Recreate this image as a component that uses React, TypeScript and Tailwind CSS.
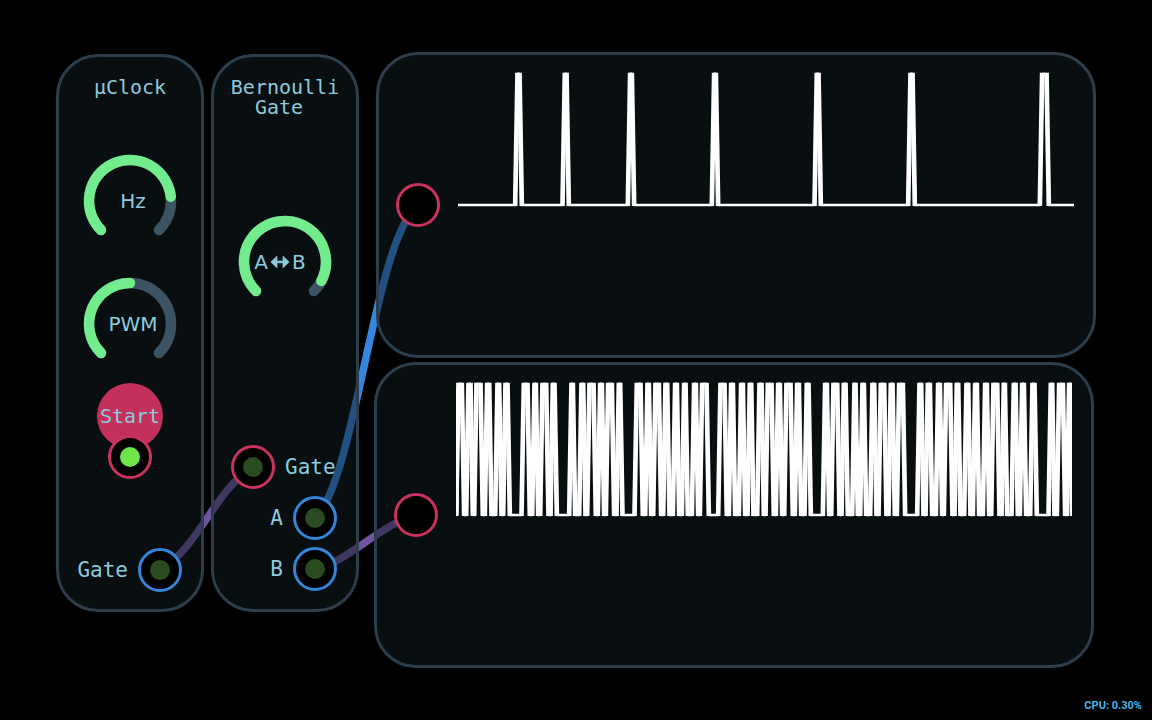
import { useState, type ReactNode } from "react";

type Polarity = "in" | "out";

const SCALE = 3;
const TOP = 6;
const BASE = 399;
const HALF = 7.5;
const SLOPE = 7;

// Pulse extents, in thirds of a pixel along the trace.
const SPARSE: [number, number][] = [
  [171, 192],
  [313, 333],
  [509, 529],
  [761, 781],
  [1069, 1089],
  [1350, 1371],
  [1745, 1773],
];

const DENSE: [number, number][] = [
  [0, 25], [30, 51], [54, 81], [86, 107], [117, 137], [141, 162],
  [196, 222], [228, 247], [252, 278], [283, 303],
  [339, 358], [369, 389], [393, 420], [425, 445], [449, 475], [481, 500],
  [535, 561], [567, 586], [591, 616], [621, 641], [650, 670], [677, 696], [707, 727], [731, 759],
  [786, 813], [818, 838], [848, 868], [874, 893], [903, 924], [928, 954], [959, 979], [984, 1011], [1016, 1036], [1045, 1065],
  [1100, 1120], [1125, 1151], [1156, 1176], [1188, 1206], [1212, 1231], [1242, 1262], [1267, 1292], [1297, 1317], [1322, 1348],
  [1383, 1403], [1408, 1429], [1439, 1459], [1463, 1490], [1495, 1514], [1524, 1544], [1550, 1570], [1580, 1600],
  [1605, 1631], [1636, 1654], [1666, 1686], [1691, 1711], [1722, 1743],
  [1777, 1796], [1802, 1828], [1832, 1849],
];

function Trace({ pulses, name }: { pulses: [number, number][]; name: string }) {
  const points: string[] = [];
  const first = pulses[0][0];
  const last = pulses[pulses.length - 1][1];
  if (first > 10) points.push(`0,${BASE}`);
  pulses.forEach(([a, b]) => {
    points.push(
      `${Math.max(a + HALF - SLOPE, 4)},${BASE}`,
      `${a + HALF},${TOP}`,
      `${b - HALF},${TOP}`,
      `${Math.min(b - HALF + SLOPE, 1846)},${BASE}`,
    );
  });
  if (last < 1830) points.push(`1848,${BASE}`);
  return (
    <svg
      className="h-[136px] w-[616px] shrink-0 self-start"
      viewBox={`0 0 ${616 * SCALE} ${136 * SCALE}`}
      role="img"
      aria-label={name}
    >
      <polyline points={points.join(" ")} fill="none" stroke="#fff" strokeWidth="8" strokeLinejoin="round" />
      {pulses.map(([a, b]) => (
        <g key={a} stroke="#fff" strokeWidth="14">
          <line x1={a + HALF - SLOPE} y1={BASE + 3} x2={a + HALF} y2={TOP - 4} />
          <line x1={b - HALF} y1={TOP - 4} x2={b - HALF + SLOPE} y2={BASE + 3} />
        </g>
      ))}
    </svg>
  );
}

function point(deg: number) {
  const rad = (deg * Math.PI) / 180;
  return `${(46 + 41 * Math.cos(rad)).toFixed(2)} ${(46 + 41 * Math.sin(rad)).toFixed(2)}`;
}

function arc(fraction: number) {
  const sweep = 270 * fraction;
  return `M${point(135)}A41 41 0 ${sweep > 180 ? 1 : 0} 1 ${point(135 + sweep)}`;
}

function Knob({ name, initial, children }: { name: string; initial: number; children: ReactNode }) {
  const [value, setValue] = useState(initial);
  return (
    <label className="relative flex size-[92px] shrink-0 items-center justify-center self-center">
      <svg className="absolute inset-0 overflow-visible" viewBox="0 0 92 92" aria-hidden="true">
        <g fill="none" strokeWidth="10.5" strokeLinecap="round">
          <path d={arc(1)} stroke="#3c5364" />
          <path d={arc(value / 1000)} stroke="#72ec8c" />
        </g>
      </svg>
      <span className="relative flex items-center font-['DejaVu_Sans',sans-serif] text-[20px] leading-5">
        {children}
      </span>
      <input
        type="range"
        min={0}
        max={1000}
        value={value}
        aria-label={name}
        onChange={(e) => setValue(Number(e.target.value))}
        className="absolute inset-0 cursor-pointer opacity-0"
      />
    </label>
  );
}

function Jack({ name, kind, led }: { name: string; kind: Polarity; led?: "on" | "off" }) {
  return (
    <button
      type="button"
      aria-label={name}
      className={`relative flex size-11 shrink-0 items-center justify-center rounded-full border-3 bg-black ${
        kind === "in" ? "border-[#c7325f]" : "border-[#3484d8]"
      }`}
    >
      {led && <span className={`size-5 rounded-full ${led === "on" ? "bg-[#6ee449]" : "bg-[#2a4a20]"}`} />}
    </button>
  );
}

function Module({ title, place, children }: { title: string; place: string; children: ReactNode }) {
  return (
    <section
      className={`absolute flex h-[558px] w-[148px] flex-col rounded-[42px] border-3 border-[#2c3e4c] bg-[#121c22]/50 px-[17px] pt-5 ${place}`}
    >
      <h2 className="h-[41px] self-center whitespace-pre">{title}</h2>
      {children}
    </section>
  );
}

function Scope({ place, name, children }: { place: string; name: string; children: ReactNode }) {
  return (
    <section
      className={`absolute flex h-[306px] w-[720px] items-center gap-[18px] rounded-[42px] border-3 border-[#2c3e4c] bg-[#121c22]/50 px-[17px] py-[17px] ${place}`}
    >
      <Jack name={name} kind="in" />
      {children}
    </section>
  );
}

function Cables() {
  return (
    <svg className="absolute top-0 left-0 h-[720px] w-[1152px]" viewBox="0 0 1152 720" aria-hidden="true">
      <g fill="none" strokeWidth="7.5">
        <path d="M161 570C200 545 215 490 253 467" stroke="#6f549f" />
        <path d="M315 570C350 560 380 525 416 515" stroke="#6f549f" />
        <path d="M315 518C356 480 374 240 418 205" stroke="#3486dc" />
      </g>
    </svg>
  );
}

export default function App() {
  const [running, setRunning] = useState(true);
  return (
    <main className="relative min-h-screen w-full overflow-hidden bg-black font-['DejaVu_Sans_Mono',monospace] text-[20px] leading-5 text-[#8ccbdd]">
      <Cables />

      <Module title="µClock" place="top-[54px] left-14">
        <div className="mt-[37px] flex flex-col gap-[31px]">
          <Knob name="Hz" initial={811}>
            <span className="pl-1.5">Hz</span>
          </Knob>
          <Knob name="PWM" initial={500}>
            <span className="pl-1.5">PWM</span>
          </Knob>
        </div>
        <div className="mt-[13px] flex flex-col items-center">
          <button
            type="button"
            aria-pressed={running}
            onClick={() => setRunning(!running)}
            className="size-[66px] rounded-full bg-[#c4305c]"
          >
            Start
          </button>
          <div className="-mt-3.5 flex">
            <Jack name="Start trigger" kind="in" led={running ? "on" : "off"} />
          </div>
        </div>
        <div className="mt-[69px] flex items-center justify-end gap-2.5 pr-0.5 text-[21px]">
          <span>Gate</span>
          <Jack name="Gate out" kind="out" led="off" />
        </div>
      </Module>

      <Module title={"Bernoulli\n  Gate"} place="top-[54px] left-[211px]">
        <div className="mt-[98px] flex flex-col">
          <Knob name="A to B balance" initial={935}>
            <span>A</span>
            <svg className="mx-0.5 h-5 w-5" viewBox="0 0 20 20" fill="currentColor" aria-hidden="true">
              <path d="M0.5 10L7.3 3.4V8.8H12.7V3.4L19.5 10L12.7 16.6V11.2H7.3V16.6Z" />
            </svg>
            <span className="pr-2.5">B</span>
          </Knob>
        </div>
        <div className="mt-[137px] flex flex-col gap-[7px] text-[21px]">
          <div className="flex items-center gap-2.5">
            <Jack name="Gate in" kind="in" led="off" />
            <span>Gate</span>
          </div>
          <div className="flex items-center justify-end gap-2.5 pr-0.5">
            <span>A</span>
            <Jack name="A out" kind="out" led="off" />
          </div>
          <div className="flex items-center justify-end gap-2.5 pr-0.5">
            <span>B</span>
            <Jack name="B out" kind="out" led="off" />
          </div>
        </div>
      </Module>

      <Scope place="top-[52px] left-[376px]" name="Scope 1 in">
        <Trace pulses={SPARSE} name="Scope 1 trace" />
      </Scope>
      <Scope place="top-[362px] left-[374px]" name="Scope 2 in">
        <Trace pulses={DENSE} name="Scope 2 trace" />
      </Scope>

      <p className="absolute right-2.5 bottom-1.5 font-['Roboto',sans-serif] text-[11px] leading-4 font-bold text-[#46b4e6]">
        CPU: 0.30%
      </p>
    </main>
  );
}
